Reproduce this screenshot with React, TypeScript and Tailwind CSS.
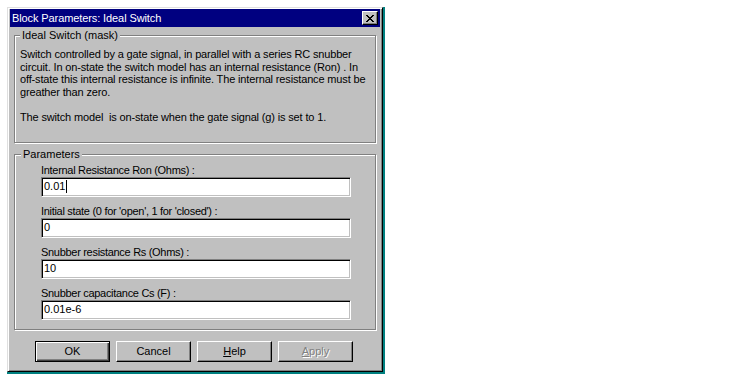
const font = { fontFamily: '"Liberation Sans", Arial, sans-serif' };

function Field({ label, value, caret }: { label: string; value: string; caret?: boolean }) {
  return (
    <div className="flex flex-col">
      <div className="h-[13px] leading-[13px] whitespace-nowrap tracking-[-0.3px]">{label}</div>
      <div className="flex h-[20px] w-[310px] items-center border border-t-[#808080] border-l-[#808080] border-r-white border-b-white bg-white pl-[2px] shadow-[inset_1px_1px_0_#000,inset_-1px_-1px_0_#c0c0c0]">
        <span className="leading-[13px]">{value}</span>
        {caret && <span className="ml-[1px] h-[13px] w-[1px] bg-black" />}
      </div>
    </div>
  );
}

function Button({ children, primary, disabled }: { children: React.ReactNode; primary?: boolean; disabled?: boolean }) {
  return (
    <button
      className={
        primary
          ? 'flex h-[21px] w-[75px] items-center justify-center border border-black bg-[#c0c0c0] shadow-[inset_1px_1px_0_#fff,inset_-1px_-1px_0_#404040,inset_-2px_-2px_0_#808080]'
          : 'flex h-[21px] w-[75px] items-center justify-center border border-t-white border-l-white border-r-black border-b-black bg-[#c0c0c0] shadow-[inset_-1px_-1px_0_#808080]'
      }
    >
      <span className={disabled ? 'text-[#808080] [text-shadow:1px_1px_0_#fff]' : 'text-black'}>{children}</span>
    </button>
  );
}

export default function App() {
  return (
    <div className="h-[382px] w-[750px] bg-white pl-[7px] pt-[7px] text-[11px] text-black" style={font}>
      {/* dialog window */}
      <div className="flex h-[365px] w-[376px] flex-col border border-t-[#dfdfdf] border-l-[#dfdfdf] border-r-black border-b-black bg-[#c0c0c0] px-[2px] pt-[1px] shadow-[inset_1px_1px_0_#fff,inset_-1px_-1px_0_#808080,1px_1px_0_1px_#008080]">
        {/* title bar */}
        <div className="flex h-[18px] items-center justify-between bg-[#000080] pl-[2px] pr-[2px]">
          <span className="text-[11px] tracking-[-0.1px] text-white">Block Parameters: Ideal Switch</span>
          <div className="flex h-[14px] w-[16px] items-center justify-center border border-t-white border-l-white border-r-black border-b-black bg-[#c0c0c0] shadow-[inset_-1px_-1px_0_#808080]">
            <svg width="8" height="7" viewBox="0 0 8 7" shapeRendering="crispEdges">
              <path d="M0 0h2v1H0zM6 0h2v1H6zM1 1h2v1H1zM5 1h2v1H5zM2 2h4v1H2zM3 3h2v1H3zM2 4h4v1H2zM1 5h2v1H1zM5 5h2v1H5zM0 6h2v1H0zM6 6h2v1H6z" fill="#000" />
            </svg>
          </div>
        </div>

        {/* description group */}
        <fieldset className="mx-[4px] mt-[2px] w-[362px] min-w-0 border border-[#808080] pb-[18px] pl-[5px] pr-[4px] pt-[6px] shadow-[inset_1px_1px_0_#fff,1px_1px_0_#fff]">
          <legend className="bg-[#c0c0c0] px-[2px] leading-[13px]">Ideal Switch (mask)</legend>
          <p className="whitespace-nowrap leading-[12.6px] tracking-[-0.15px]">
            Switch controlled by a gate signal, in parallel with a series RC snubber
            <br />
            circuit. In on-state the switch model has an internal resistance (Ron) . In
            <br />
            off-state this internal resistance is infinite. The internal resistance must be
            <br />
            greather than zero.
            <br />
            <br />
            The switch model&nbsp; is on-state when the gate signal (g) is set to 1.
          </p>
        </fieldset>

        {/* parameters group */}
        <fieldset className="mx-[4px] mt-[5px] w-[362px] min-w-0 border border-[#808080] pb-[9px] pl-[6px] pt-[3px] shadow-[inset_1px_1px_0_#fff,1px_1px_0_#fff]">
          <legend className="bg-[#c0c0c0] px-[2px] leading-[13px]">Parameters</legend>
          <div className="ml-[20px] flex flex-col gap-[8px]">
            <Field label="Internal Resistance Ron (Ohms) :" value="0.01" caret />
            <Field label="Initial state (0 for 'open', 1 for 'closed') :" value="0" />
            <Field label="Snubber resistance Rs (Ohms) :" value="10" />
            <Field label="Snubber capacitance Cs (F) :" value="0.01e-6" />
          </div>
        </fieldset>

        {/* buttons */}
        <div className="ml-[25px] mt-[11px] flex gap-[6px]">
          <Button primary>OK</Button>
          <Button>Cancel</Button>
          <Button>
            <span className="underline underline-offset-[1px]">H</span>elp
          </Button>
          <Button disabled>
            <span className="underline underline-offset-[1px]">A</span>pply
          </Button>
        </div>
      </div>
    </div>
  );
}
